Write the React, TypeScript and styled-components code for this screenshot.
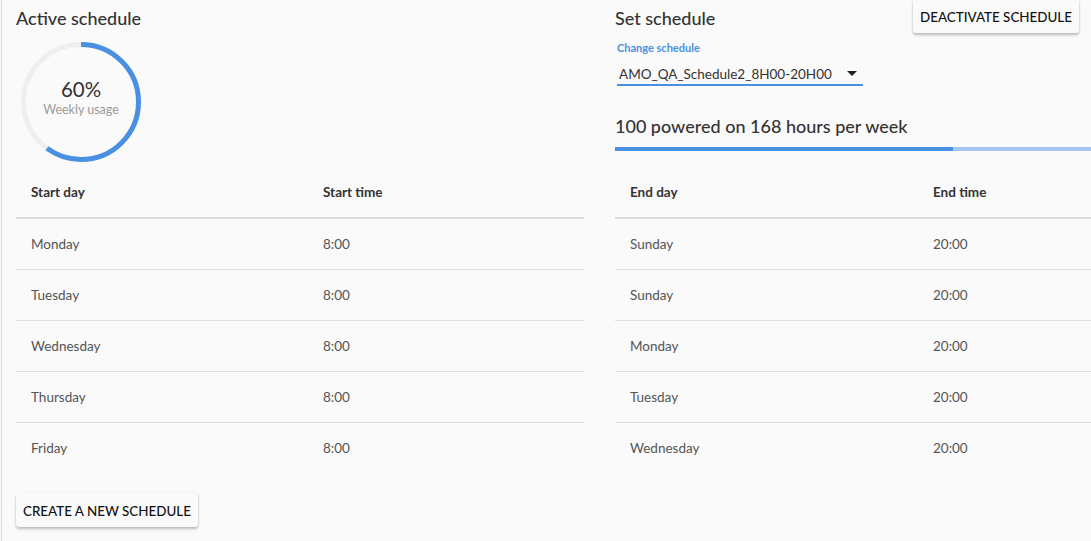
import React from "react";
import styled, { createGlobalStyle } from "styled-components";

const Global = createGlobalStyle`
  html, body { margin: 0; padding: 0; background: #fafafa; }
  body { font-family: "Segoe UI", Lato, "Noto Sans", sans-serif; color: #333; overflow: hidden; }
  * { box-sizing: border-box; }
`;

const Page = styled.div`
  margin-left: 1px;
  border-left: 1px solid #dcdcdc;
  min-height: 541px;
  padding-left: 14px;
  display: flex;
  align-items: flex-start;
  gap: 31px;
  overflow: hidden;
  width: 1090px;
`;

const Panel = styled.section<{ $w: number }>`
  flex: 0 0 ${(p) => p.$w}px;
  width: ${(p) => p.$w}px;
  display: flex;
  flex-direction: column;
`;

const TitleRow = styled.div`
  height: 36px;
  display: flex;
  align-items: center;
  justify-content: space-between;
`;

const Title = styled.h2`
  margin: 0;
  font-size: 18px;
  font-weight: 500;
  color: #333;
  line-height: 36px;
`;

const RaisedButton = styled.button<{ $mt?: number }>`
  font-family: inherit;
  font-size: 13.4px;
  font-weight: 500;
  color: #111;
  background: #fafafa;
  border: none;
  border-radius: 3px;
  padding: 1px 7px 0;
  height: 34px;
  margin-top: ${(p) => p.$mt ?? 0}px;
  box-shadow: 0 2px 3px rgba(0, 0, 0, 0.25), 0 0 1px rgba(0, 0, 0, 0.12);
  cursor: pointer;
  white-space: nowrap;
`;

const DeactivateWrap = styled.div`
  margin-right: 126px;
  align-self: flex-start;
`;

const Gauge = styled.div`
  position: relative;
  width: 120px;
  height: 120px;
  margin: 6px 0 4px 5px;
`;

const GaugeLabel = styled.div`
  position: absolute;
  inset: 0;
  display: flex;
  flex-direction: column;
  align-items: center;
  justify-content: center;
`;

const GaugeValue = styled.div`
  font-size: 20.5px;
  font-weight: 400;
  color: #333;
  line-height: 22px;
  margin-top: -8px;
`;

const GaugeCaption = styled.div`
  font-size: 12.5px;
  color: #9a9a9a;
  line-height: 18px;
  margin-top: 1px;
`;

const Table = styled.table`
  width: 100%;
  border-collapse: collapse;
  table-layout: fixed;
`;

const Th = styled.th`
  text-align: left;
  font-size: 13.5px;
  font-weight: 700;
  color: #333;
  height: 52px;
  padding: 0 15px;
  border-bottom: 2px solid #dcdcdc;
`;

const Td = styled.td<{ $last?: boolean }>`
  font-size: 13.5px;
  color: #555;
  height: ${(p) => (p.$last ? 50 : 51)}px;
  padding: 1px 15px 0;
  border-bottom: ${(p) => (p.$last ? "none" : "1px solid #e0e0e0")};
`;

const CreateWrap = styled.div`
  margin-top: 21px;
`;

const FieldLabel = styled.div`
  margin: 5px 0 0 2px;
  font-size: 11px;
  font-weight: 700;
  color: #4a90e2;
  line-height: 14px;
`;

const Select = styled.div`
  margin: 5px 0 0 2px;
  width: 246px;
  height: 26px;
  border-bottom: 2px solid #4a90e2;
  display: flex;
  align-items: center;
  justify-content: space-between;
  padding: 3px 6px 0 2px;
  font-size: 13.5px;
  color: #333;
`;

const Caret = styled.span`
  width: 0;
  height: 0;
  border-left: 5px solid transparent;
  border-right: 5px solid transparent;
  border-top: 5px solid #222;
  margin-top: -1px;
`;

const Summary = styled.div`
  margin-top: 28px;
  font-size: 18px;
  font-weight: 500;
  color: #333;
  line-height: 24px;
`;

const Bar = styled.div`
  margin: 9px 0 15px;
  height: 4px;
  background: #a3c6f1;
  display: flex;
`;

const BarFill = styled.div`
  height: 100%;
  background: #4a90e2;
`;

const startRows = [
  ["Monday", "8:00"],
  ["Tuesday", "8:00"],
  ["Wednesday", "8:00"],
  ["Thursday", "8:00"],
  ["Friday", "8:00"],
];
const endRows = [
  ["Sunday", "20:00"],
  ["Sunday", "20:00"],
  ["Monday", "20:00"],
  ["Tuesday", "20:00"],
  ["Wednesday", "20:00"],
];

function ScheduleTable({ heads, rows, col1 }: { heads: string[]; rows: string[][]; col1: number }) {
  return (
    <Table>
      <colgroup>
        <col style={{ width: col1 }} />
        <col />
      </colgroup>
      <thead>
        <tr>
          <Th>{heads[0]}</Th>
          <Th>{heads[1]}</Th>
        </tr>
      </thead>
      <tbody>
        {rows.map((r, i) => (
          <tr key={i}>
            <Td $last={i === rows.length - 1}>{r[0]}</Td>
            <Td $last={i === rows.length - 1}>{r[1]}</Td>
          </tr>
        ))}
      </tbody>
    </Table>
  );
}

export default function App() {
  const pct = 0.6;
  const r = 57.5;
  const c = 2 * Math.PI * r;
  const poweredShare = 0.573;
  return (
    <>
      <Global />
      <Page>
        <Panel $w={568}>
          <TitleRow>
            <Title>Active schedule</Title>
          </TitleRow>
          <Gauge>
            <svg width="120" height="120" viewBox="0 0 120 120">
              <circle cx="60" cy="60" r={r} fill="none" stroke="#efefef" strokeWidth="5" />
              <circle
                cx="60"
                cy="60"
                r={r}
                fill="none"
                stroke="#4a90e2"
                strokeWidth="5"
                strokeDasharray={`${c * pct} ${c}`}
                transform="rotate(-90 60 60)"
              />
            </svg>
            <GaugeLabel>
              <GaugeValue>60%</GaugeValue>
              <GaugeCaption>Weekly usage</GaugeCaption>
            </GaugeLabel>
          </Gauge>
          <ScheduleTable heads={["Start day", "Start time"]} rows={startRows} col1={292} />
          <CreateWrap>
            <RaisedButton>CREATE A NEW SCHEDULE</RaisedButton>
          </CreateWrap>
        </Panel>
        <Panel $w={590}>
          <TitleRow>
            <Title>Set schedule</Title>
            <DeactivateWrap>
              <RaisedButton $mt={-1}>DEACTIVATE SCHEDULE</RaisedButton>
            </DeactivateWrap>
          </TitleRow>
          <FieldLabel>Change schedule</FieldLabel>
          <Select>
            <span>AMO_QA_Schedule2_8H00-20H00</span>
            <Caret />
          </Select>
          <Summary>100 powered on 168 hours per week</Summary>
          <Bar>
            <BarFill style={{ width: `${poweredShare * 100}%` }} />
          </Bar>
          <ScheduleTable heads={["End day", "End time"]} rows={endRows} col1={303} />
        </Panel>
      </Page>
    </>
  );
}
